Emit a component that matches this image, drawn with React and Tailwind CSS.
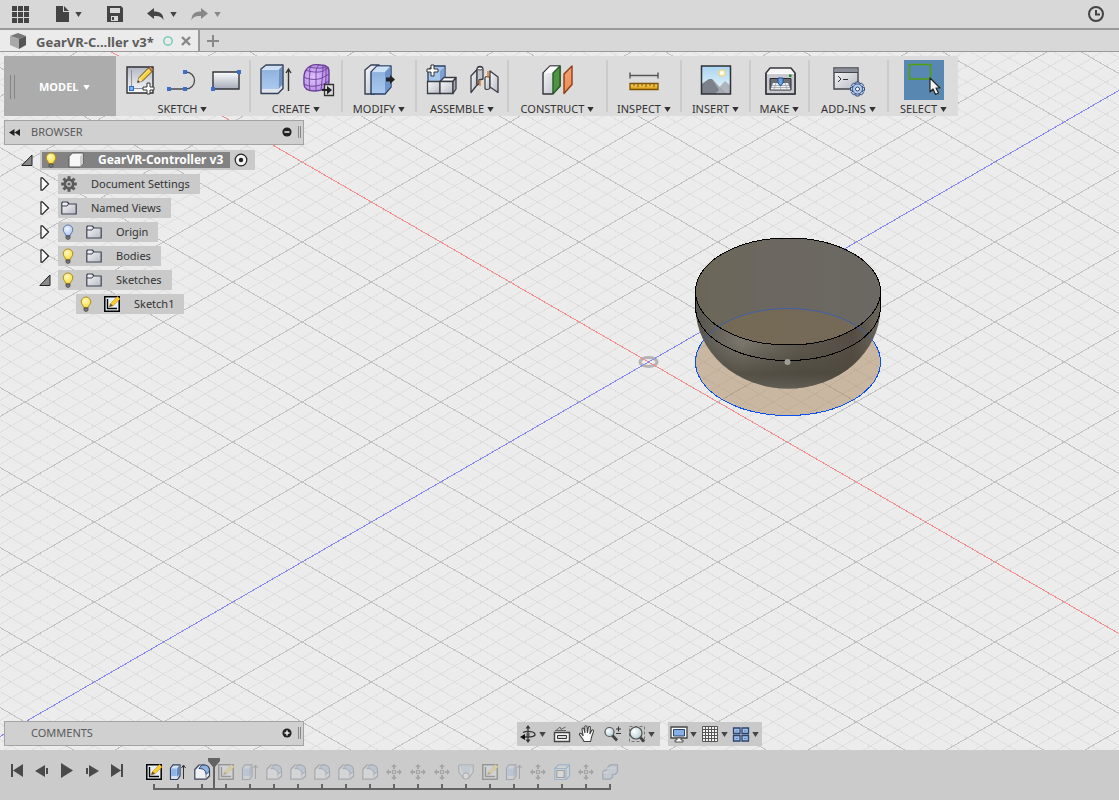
import { useState } from "react";
import clsx from "clsx";

/* ─────────────── SMALL SHARED GLYPHS ─────────────── */

const Caret = ({ className }) => (
  <svg className={clsx("shrink-0", className)} width="7" height="5" viewBox="0 0 7 5">
    <path d="M.3 0h6.400L3.500 5z" fill="currentColor" />
  </svg>
);

const Plus = ({ x, y }) => (
  <path
    transform={`translate(${x} ${y})`}
    d="M4 0h3v4h4v3H7v4H4V7H0V4h4z"
    fill="#fff"
    stroke="#333"
    strokeWidth="1"
  />
);

/* ─────────────── RIBBON ICONS ─────────────── */

const Defs = () => (
  <svg width="0" height="0" className="absolute">
    <defs>
      <linearGradient id="paper" x1="0" y1="0" x2="0" y2="1">
        <stop offset="0" stopColor="#b4b8c4" />
        <stop offset="1" stopColor="#fdfdfd" />
      </linearGradient>
      <linearGradient id="plate" x1="0" y1="0" x2="0" y2="1">
        <stop offset="0" stopColor="#fdfdfd" />
        <stop offset="1" stopColor="#a4abb9" />
      </linearGradient>
      <linearGradient id="steel" x1="0" y1="0" x2="1" y2="1">
        <stop offset="0" stopColor="#fafafa" />
        <stop offset="1" stopColor="#b6bac4" />
      </linearGradient>
      <linearGradient id="blueFace" x1="0" y1="0" x2="0" y2="1">
        <stop offset="0" stopColor="#8fb2de" />
        <stop offset="1" stopColor="#abc9ee" />
      </linearGradient>
      <linearGradient id="sky" x1="0" y1="0" x2="0" y2="1">
        <stop offset="0" stopColor="#a9d4f0" />
        <stop offset="1" stopColor="#eef8fc" />
      </linearGradient>
      <linearGradient id="gold" x1="0" y1="0" x2="0" y2="1">
        <stop offset="0" stopColor="#fbd765" />
        <stop offset="1" stopColor="#d99a10" />
      </linearGradient>
      <linearGradient id="orange" x1="0" y1="0" x2="0" y2="1">
        <stop offset="0" stopColor="#f3a27a" />
        <stop offset="1" stopColor="#ee8a4c" />
      </linearGradient>
      <radialGradient id="glow" cx="0.4" cy="0.35" r="0.7">
        <stop offset="0" stopColor="#fffbc0" />
        <stop offset="1" stopColor="#f7da38" />
      </radialGradient>
      <radialGradient id="dim" cx="0.4" cy="0.35" r="0.7">
        <stop offset="0" stopColor="#f2f7ff" />
        <stop offset="1" stopColor="#a9c3f0" />
      </radialGradient>
      <radialGradient id="lens" cx="0.35" cy="0.35" r="0.7">
        <stop offset="0" stopColor="#ffffff" />
        <stop offset="1" stopColor="#b4cfd6" />
      </radialGradient>
      <radialGradient id="violet" cx="0.4" cy="0.5" r="0.6">
        <stop offset="0" stopColor="#dfc2fd" />
        <stop offset="1" stopColor="#b48be6" />
      </radialGradient>
    </defs>
  </svg>
);

const RibbonSvg = ({ children }) => (
  <svg width="32" height="36" viewBox="0 0 32 36" fill="none" className="shrink-0 overflow-visible">
    {children}
  </svg>
);

const SketchIcon = () => (
  <RibbonSvg>
    <path d="M3 5h26v26H3z" fill="url(#paper)" stroke="#2f3136" strokeWidth="1.4" />
    <path d="M7.500 24V8M10 26.500h9" stroke="#8d919b" />
    <rect x="5.500" y="24.500" width="4" height="4" fill="#7fb2ee" stroke="#2b6cc4" />
    <path d="M15 15.500 24.500 6l3.500 3.500-9.500 9.500-5 1.500z" fill="#f8cf3c" stroke="#5d4a13" />
    <path d="m24.500 6 2-1.500 3 3L28 9.500z" fill="#c78358" stroke="#6b4630" strokeWidth=".8" />
    <path d="M16 16.500 25.500 7" stroke="#fff2a5" />
    <path d="m13.500 20.500 1.500-5 3.500 3.500z" fill="#f3e2bd" />
    <path d="m13.500 20.500.7-2.200 1.600 1.500z" fill="#333" />
    <Plus x={19} y={21} />
  </RibbonSvg>
);

const LineIcon = () => (
  <RibbonSvg>
    <path d="M2 27h17a8.500 8.500 0 0 0 0-17" stroke="#4a4a4a" strokeWidth="1.3" />
    <path d="M0 25h4v4H0zM16 25h4v4h-4zM16 8h4v4h-4z" fill="#3a6fd0" />
  </RibbonSvg>
);

const RectIcon = () => (
  <RibbonSvg>
    <path d="M3 10h26v17H3z" fill="url(#plate)" stroke="#33353a" strokeWidth="1.4" />
    <path d="M27 8h4v4h-4zM1 25h4v4H1z" fill="#3a6fd0" />
  </RibbonSvg>
);

const ExtrudeIcon = () => (
  <RibbonSvg>
    <path d="M2 7v24.500h17l5-5V3H7z" fill="#dfe3ea" strokeLinejoin="round" />
    <path d="M2.500 7.500 7 3h17l-4.500 4.500z" fill="#cfe0f4" />
    <path d="M3 8h16v19H3z" fill="url(#blueFace)" />
    <path d="M19.500 8 23.500 4v18.500l-4 4.500z" fill="#6a8fc4" />
    <path d="M2 7 7 3h17v23.500l-5 5H2z" stroke="#34405a" strokeWidth="1.4" strokeLinejoin="round" />
    <path d="M29.500 29V8M27 11l2.500-4 2.500 4" stroke="#333" strokeWidth="1.4" />
  </RibbonSvg>
);

const FormIcon = () => (
  <RibbonSvg>
    <path
      d="M4 8c3-5 9-6 15-5 5 0 8 2 8 7v10c0 6-7 9-14 9-7 0-11-2-11-7 0-5-1-10 2-14z"
      fill="url(#violet)"
      stroke="#6a4196"
      strokeWidth="1.4"
    />
    <path d="M4 8c4 2 13 3 17 1M7 5c5 1 12 2 17 0M2 15c5 3 13 3 18 1M2 22c5 3 13 3 18 0M21 9c-1 6-1 13-2 19M8 10c-1 6-1 12 0 18M14 10v19M21 9l6-4M20 16l7-4M20 23l7-4M24 6c0 8 0 14-1 20M10 3c-2 2-3 4-2 7M17 3c-2 2-3 4-3 7M22 3c-2 2-1 4-1 6" stroke="#6b3f96" strokeWidth=".9" />
    <path d="M22.500 22.500h9v11h-9z" fill="#dcdcdc" stroke="#333" strokeWidth="1.3" />
    <path d="M20 27h5v-3l5 4-5 4.500V29h-5z" fill="#222" />
  </RibbonSvg>
);

const ModifyIcon = () => (
  <RibbonSvg>
    <path d="M2 8 8 3h8v24l-5 5H2z" fill="url(#steel)" stroke="#333f55" strokeWidth="1.4" strokeLinejoin="round" />
    <path d="M8 10 14 4h14v21l-6 7H8z" fill="#9cbfe9" stroke="#2c3f63" strokeWidth="1.4" strokeLinejoin="round" />
    <path d="M9 10 14 4.500h13L22 10z" fill="#cfe1f6" />
    <path d="M22 10v21l5.500-6V4.500z" fill="#6d95cb" />
    <path d="M9 10.500h13v20.500H9z" fill="url(#blueFace)" />
    <path d="M23 15.500h4v-2.500l5 4.500-5 4.500v-2.500h-4z" fill="#222" />
  </RibbonSvg>
);

const AssembleIcon = () => (
  <RibbonSvg>
    <path d="M3 20V8l5-4h12v13l-4 3z" fill="#a5c5ec" stroke="#2c3f63" strokeWidth="1.3" />
    <path d="M15 9v10l4.500-3V5z" fill="#7ba1d4" />
    <path d="M2.500 19.500H15v12H2.500z" fill="url(#steel)" stroke="#3a3d44" strokeWidth="1.3" />
    <path d="m15 19.500 4-4h12l-3 4z" fill="#fafafa" stroke="#3a3d44" strokeWidth="1.3" strokeLinejoin="round" />
    <path d="M15 19.500h13v12H15z" fill="url(#steel)" stroke="#3a3d44" strokeWidth="1.3" />
    <path d="m28 19.500 3-4v11.500l-3 4.500z" fill="#a9adb6" stroke="#3a3d44" strokeWidth="1.3" strokeLinejoin="round" />
    <Plus x={2} y={3} />
  </RibbonSvg>
);

const JointIcon = () => (
  <RibbonSvg>
    <path d="M3 14 9 7.500V23l-6 7.500z" fill="url(#steel)" stroke="#3a3d44" strokeWidth="1.3" strokeLinejoin="round" />
    <path d="M9 7.500c0-4 6-4 6 0V17l-4 1v4l-2 1z" fill="#c3c6cd" stroke="#3a3d44" strokeWidth="1.3" strokeLinejoin="round" />
    <ellipse cx="12" cy="6.500" rx="2.500" ry="1.500" fill="#fff" stroke="#3a3d44" />
    <path d="M17 16c0-2 5-2 5 0v10c-1 2-5 2-5 0z" fill="url(#steel)" stroke="#3a3d44" strokeWidth="1.2" />
    <path d="m22 9 8 6v15.500L22 25z" fill="url(#steel)" stroke="#3a3d44" strokeWidth="1.3" strokeLinejoin="round" />
    <path d="M12 18v6M20 9v7" stroke="#e8781e" strokeWidth="1.400" />
  </RibbonSvg>
);

const ConstructIcon = () => (
  <RibbonSvg>
    <path d="M1 11 8 4h10v20l-8 8H1z" fill="url(#steel)" stroke="#33363c" strokeWidth="1.4" strokeLinejoin="round" />
    <path d="M2 11 8 4.500h9L11 11z" fill="#fff" />
    <path d="m11 11 7-7v20l-7 8z" fill="#4f9440" stroke="#2c5a25" strokeWidth="1.4" strokeLinejoin="round" />
    <path d="m22 12 8-8v18.500l-8 9z" fill="url(#orange)" stroke="#8f3d13" strokeWidth="1.4" strokeLinejoin="round" />
  </RibbonSvg>
);

const InspectIcon = () => (
  <RibbonSvg>
    <path d="M2 13.500h28M2 10.500v6M30 10.500v6" stroke="#555" strokeWidth="1.4" />
    <path d="M2 21.500h28v6H2z" fill="url(#gold)" stroke="#7d5206" strokeWidth="1.300" />
    <path d="M6 22v2M10 22v3M14 22v2M18 22v3M22 22v2M26 22v3" stroke="#7d5206" />
  </RibbonSvg>
);

const InsertIcon = () => (
  <RibbonSvg>
    <path d="M1.500 4h29v28h-29z" fill="url(#sky)" />
    <circle cx="22" cy="11" r="3" fill="#fffef0" stroke="#f3d78a" strokeWidth="1.5" />
    <path d="m14 31 11-12 6 5v8H14z" fill="#b0b5bd" />
    <path d="M1.500 22 9 17h3l14 15H1.500z" fill="#7b808a" />
    <path d="m12 17 7 11-4 4h11z" fill="#a5a9b1" />
    <path d="M1.500 4h29v28h-29z" stroke="#2e3136" strokeWidth="1.500" />
  </RibbonSvg>
);

const MakeIcon = () => (
  <RibbonSvg>
    <path d="M2 11 6 6h21l4 5v21H2z" fill="#f6f6f6" stroke="#36383c" strokeWidth="1.500" strokeLinejoin="round" />
    <path d="M2.500 12h28v19.500h-28z" fill="#c8cacf" />
    <path d="M2.500 11.500h28" stroke="#fff" />
    <path d="M25 12.500h2.500V15H25z" fill="#1c8a2a" />
    <path d="M6 16.500h21v11.500H6z" fill="#6b6e75" stroke="#2b2d31" />
    <path d="m9 21 15 0 2.500 6.500h-20z" fill="#f1f1f1" />
    <path d="M8 23.500h17M7 25.500h19M12 21l-2 6M16.500 22v6M21 21l2 6" stroke="#a0a3aa" strokeWidth=".8" />
    <path d="M14 16h5v5l-2.500 3L14 21z" fill="#6aa0e0" stroke="#1e4d90" />
    <path d="M2 11v21h29V11" stroke="#36383c" strokeWidth="1.500" strokeLinejoin="round" />
  </RibbonSvg>
);

const Teeth = () =>
  [0, 45, 90, 135, 180, 225, 270, 315].map((a) => (
    <path key={a} d="M-1.700-7h3.400v4h-3.400z" transform={`rotate(${a})`} fill="#b4cdf0" stroke="#2c4470" strokeWidth=".9" />
  ));

const AddInsIcon = () => (
  <RibbonSvg>
    <path d="M1 6h24v21H1z" fill="url(#steel)" stroke="#43454c" strokeWidth="1.400" />
    <path d="M1.500 6.500h23v4h-23z" fill="#8c8f99" />
    <path d="M1 10.500h24" stroke="#43454c" />
    <path d="m5 14 3 3-3 3M10 17.500h5" stroke="#333" />
    <g transform="translate(24.500 27)">
      <Teeth />
      <circle r="5" fill="#b4cdf0" stroke="#2c4470" strokeWidth=".8" />
      <circle r="2" fill="#fff" stroke="#2c4470" />
    </g>
  </RibbonSvg>
);

const SelectIcon = () => (
  <svg width="40" height="40" viewBox="0 0 40 40" fill="none" className="shrink-0 bg-[#5888b2]">
    <path d="M5.500 4.500h21v14.500h-21z" stroke="#4fa00c" strokeWidth="1.600" />
    <path d="M26 18v14l3-3 2.500 5.500 3-1.500-2.500-5h4z" fill="#f4f4f4" stroke="#222" strokeWidth="1.200" strokeLinejoin="round" />
  </svg>
);

const RIBBON = [
  { label: "SKETCH", width: "w-[135px]", icons: [SketchIcon, LineIcon, RectIcon] },
  { label: "CREATE", width: "w-[92px]", icons: [ExtrudeIcon, FormIcon] },
  { label: "MODIFY", width: "w-[74px]", icons: [ModifyIcon] },
  { label: "ASSEMBLE", width: "w-[92px]", icons: [AssembleIcon, JointIcon] },
  { label: "CONSTRUCT", width: "w-[99px]", icons: [ConstructIcon] },
  { label: "INSPECT", width: "w-[74px]", icons: [InspectIcon] },
  { label: "INSERT", width: "w-[69px]", icons: [InsertIcon] },
  { label: "MAKE", width: "w-[59px]", icons: [MakeIcon] },
  { label: "ADD-INS", width: "w-[79px]", icons: [AddInsIcon] },
  { label: "SELECT", width: "w-[69px]", icons: [SelectIcon] },
];

/* ─────────────── BROWSER TREE ICONS ─────────────── */

const Bulb = ({ on = true }) => (
  <svg width="14" height="16" viewBox="0 0 14 16" fill="none" className="shrink-0">
    <path
      d="M7 1a4.800 4.800 0 0 0-4.800 4.900c0 2.400 2.200 3.200 2.500 5.600h4.600c.3-2.400 2.500-3.200 2.500-5.600A4.800 4.800 0 0 0 7 1z"
      fill={on ? "url(#glow)" : "url(#dim)"}
      stroke={on ? "#b08a1c" : "#5c78b4"}
    />
    <path d="M5 12h4v2.500L7 15.500l-2-1z" fill="#777" stroke="#4a4a4a" strokeWidth=".8" />
  </svg>
);

const Folder = () => (
  <svg width="16" height="16" viewBox="0 0 16 16" fill="none" className="shrink-0">
    <path d="M.8 14v-11l1-1h4.500L8 4h7.200v10z" fill="url(#steel)" stroke="#3c4254" strokeWidth="1.200" strokeLinejoin="round" />
    <path d="M1 6h5l1.500-2" stroke="#3c4254" />
  </svg>
);

const Gear = () => (
  <svg width="16" height="16" viewBox="-8 -8 16 16" fill="none" className="shrink-0">
    {[0, 45, 90, 135, 180, 225, 270, 315].map((a) => (
      <path key={a} d="M-1.500-7.800h3V-4h-3z" transform={`rotate(${a})`} fill="#5c5c5c" />
    ))}
    <circle r="4.200" stroke="#5c5c5c" strokeWidth="2.600" />
    <circle r="1.600" fill="#5c5c5c" />
  </svg>
);

const Cube = () => (
  <svg width="16" height="16" viewBox="0 0 16 16" fill="none" className="shrink-0">
    <path d="M1 4.500 4.500 1H15v10.500L12 15H1z" fill="#f6f6f6" stroke="#555" strokeLinejoin="round" />
    <path d="m12 4.500 3-3.500v10.500L12 15z" fill="#cdcdcd" />
  </svg>
);

const SketchMini = () => (
  <svg width="16" height="16" viewBox="0 0 16 16" fill="none" className="shrink-0">
    <path d="M.8.800h14.400v14.400H.8z" fill="#e6f0fa" stroke="#000" strokeWidth="1.500" />
    <path d="M3.500 3v9.500H13" stroke="#000" strokeWidth="1.400" />
    <path d="m5.500 10.500 1-3L13.500.5 16 3 9 9.800z" fill="#f9cf2e" stroke="#d08c18" strokeWidth=".6" />
    <path d="m5 11 1.500-3.500L9 9.800z" fill="#6d5433" />
  </svg>
);

const Expander = ({ open }) => (
  <svg width="12" height="16" viewBox="0 0 12 16" fill="none" className="shrink-0">
    {open ? (
      <path d="M11 3v10.500H.8z" fill="#8a8a8a" stroke="#222" strokeLinejoin="round" />
    ) : (
      <path d="M2 1.800h1.500l6 6.200-6 6.200H2z" fill="#fafafa" stroke="#222" strokeWidth="1.200" strokeLinejoin="round" />
    )}
  </svg>
);

const TREE = [
  { label: "Document Settings", icon: Gear },
  { label: "Named Views", icon: Folder },
  { label: "Origin", icon: Folder, bulb: "off" },
  { label: "Bodies", icon: Folder, bulb: "on" },
  { label: "Sketches", icon: Folder, bulb: "on", open: true },
];

/* ─────────────── TIMELINE ICONS ─────────────── */

const Mini = ({ children }) => (
  <svg width="16" height="16" viewBox="0 0 16 16" fill="none" className="shrink-0 overflow-visible">
    {children}
  </svg>
);

const ExtrudeMini = () => (
  <Mini>
    <path d="M.5 4 3 .800h7v11L7.500 15.500h-7z" fill="#d7e2f0" stroke="#34405a" strokeWidth="1.200" strokeLinejoin="round" />
    <path d="M1.200 4.500h5.500V12H1.200z" fill="#8fb5e6" />
    <path d="M7 4.500 9.500 1v9L7 13z" fill="#5f87c0" />
    <path d="M13.500 15V2M11.500 4l2-3 2 3" stroke="#333" />
  </Mini>
);

const FilletMini = () => (
  <Mini>
    <path d="M.8 15.200V5.500L5 1h5c4 0 5.500 3 5.500 6v5L12 15.200z" fill="#eef0f4" stroke="#3c4254" strokeWidth="1.200" strokeLinejoin="round" />
    <path d="M8 1h2c4 0 5.500 3 5.500 6L12 10.500c0-3.500-2-6-7-6z" fill="#8fb2de" stroke="#2c4470" strokeLinejoin="round" />
    <path d="M12 10.500v4" stroke="#8d93a0" />
  </Mini>
);

const MoveMini = () => (
  <Mini>
    <path d="M6.500 6.500h3v3h-3z" stroke="#333" strokeWidth="1.200" />
    <path d="M8 0l3 3H9v2H7V3H5zM8 16l3-3H9v-2H7v2H5zM0 8l3-3v2h2v2H3v2zM16 8l-3-3v2h-2v2h2v2z" fill="#333" />
  </Mini>
);

const HoleMini = () => (
  <Mini>
    <path d="M.8 1h14.400v7L11 14H5L.8 8z" fill="#dfe3ea" stroke="#3c4254" />
    <path d="M2 1.500 5 9h6l3-7.500z" fill="#a9c4e6" />
    <circle cx="8" cy="12" r="3.200" fill="#fff" stroke="#3c4254" />
  </Mini>
);

const ShellMini = () => (
  <Mini>
    <path d="M.8 4.500 4.500.800h11v11L12 15.500H.8z" fill="#dbe8f6" stroke="#1f6fc0" strokeWidth="1.200" strokeLinejoin="round" />
    <path d="M.8 4.500H12l3.500-3.700M12 4.500v11" stroke="#1f6fc0" strokeWidth="1.200" />
    <path d="M2.800 6.500h7.400v7H2.800z" fill="#fff" stroke="#222" strokeWidth="1.200" />
  </Mini>
);

const CombineMini = () => (
  <Mini>
    <path d="M.8 15.200V8L3 6h3V3l2.500-2.200h7v7L13 10.500h-2.500V13l-2 2.200z" fill="#a9c4e6" stroke="#2c4470" strokeWidth="1.200" strokeLinejoin="round" />
    <path d="M1 8.500h5V4h7" stroke="#e4eefa" />
  </Mini>
);

const TIMELINE = [
  SketchMini, ExtrudeMini, FilletMini,
  SketchMini, ExtrudeMini, FilletMini, FilletMini, FilletMini, FilletMini, FilletMini,
  MoveMini, MoveMini, MoveMini, HoleMini, SketchMini, ExtrudeMini,
  MoveMini, ShellMini, MoveMini, CombineMini,
];

// Everything right of the marker is rolled back
const MARKER = 3;

const PLAYBACK = [
  { label: "Go to start", d: "M1 1h2v13H1zM13 1v13L3 7.500z" },
  { label: "Step back", d: "M10 2v12L0 8zM11 5h2v6h-2z" },
  { label: "Play", d: "M1 0v15l12-7.500z" },
  { label: "Step forward", d: "M4 2v12l10-6zM1 5h2v6H1z" },
  { label: "Go to end", d: "M11 1h2v13h-2zM1 1v13l10-6.500z" },
];

/* ─────────────── VIEWPORT ─────────────── */

const OX = 648.5;
const OY = 362;
const SLOPE = 0.57735;
const STEP = 16;

const gridPath = (filter) => {
  let d = "";
  for (let k = -60; k <= 60; k++) {
    if (!filter(k)) continue;
    const up = OY + k * STEP;
    const left = OX + 100;
    const right = 1300 - OX;
    d += `M-100 ${up - left * SLOPE}L1300 ${up + right * SLOPE}`;
    d += `M-100 ${up + left * SLOPE}L1300 ${up - right * SLOPE}`;
  }
  return d;
};

const MINOR = gridPath((k) => k % 5 !== 0);
const MAJOR = gridPath((k) => k % 5 === 0 && k !== 0);
const BODY = "M695.500 291.500V307a92.500 81.500 0 0 0 185 0V291.500a92.500 53.500 0 0 0-185 0z";

function Viewport() {
  return (
    <svg
      className="absolute inset-0 w-full h-full"
      viewBox="0 52 1119 698"
      preserveAspectRatio="xMidYMid slice"
      fill="none"
    >
      <defs>
        <linearGradient id="side" x1="0" x2="1" y1="0" y2="0">
          <stop offset="0" stopColor="#55534c" />
          <stop offset="0.250" stopColor="#7b766c" />
          <stop offset="0.550" stopColor="#5f594f" />
          <stop offset="0.850" stopColor="#544c43" />
          <stop offset="1" stopColor="#6b665c" />
        </linearGradient>
        <linearGradient id="bowl" x1="0" x2="0" y1="0" y2="1">
          <stop offset="0.700" stopColor="#4c483e" stopOpacity="0" />
          <stop offset="0.900" stopColor="#4c483e" stopOpacity="0.800" />
          <stop offset="1" stopColor="#625e55" />
        </linearGradient>
        <linearGradient id="lid" x1="0" x2="1" y1="0" y2="0">
          <stop offset="0" stopColor="#6b6757" />
          <stop offset="0.400" stopColor="#6c6760" />
          <stop offset="1" stopColor="#6b6863" />
        </linearGradient>
        <clipPath id="bodyClip">
          <path d={BODY} />
        </clipPath>
        <clipPath id="lidClip">
          <ellipse cx="788" cy="291.500" rx="92.500" ry="53.500" />
        </clipPath>
      </defs>

      <g shapeRendering="crispEdges">
        <path d={MINOR} stroke="#dfdfdf" />
        <path d={MAJOR} stroke="#c2c2c2" />
      </g>
      <ellipse cx="648.500" cy="362" rx="8.500" ry="4.500" stroke="#b5b5b5" strokeWidth="3" />
      <g shapeRendering="crispEdges">
        <path d={`M0 ${OY - OX * SLOPE}L1119 ${OY + (1119 - OX) * SLOPE}`} stroke="#f58a8a" />
        <path d={`M0 ${OY + OX * SLOPE}L1119 ${OY - (1119 - OX) * SLOPE}`} stroke="#8686f0" />
      </g>

      <ellipse cx="788" cy="362" rx="92.500" ry="53.500" fill="#a88258" fillOpacity="0.500" stroke="#0a50f0" shapeRendering="crispEdges" />
      <path d={BODY} fill="url(#side)" />
      <path d={BODY} fill="url(#bowl)" />
      <ellipse cx="788" cy="291.500" rx="92.500" ry="53.500" fill="url(#lid)" />
      <ellipse cx="788" cy="362" rx="92.500" ry="53.500" fill="#7a6c50" fillOpacity="0.600" clipPath="url(#lidClip)" />
      <path d="M695.500 362a92.500 53.500 0 0 1 185 0" stroke="#4060a8" clipPath="url(#bodyClip)" />
      <g stroke="#000" shapeRendering="crispEdges">
        <ellipse cx="788" cy="291.500" rx="92.500" ry="53.500" />
        <path d="M695.500 291.500V307a92.500 53.500 0 0 0 185 0V291.500" />
      </g>
      <circle cx="787.500" cy="362" r="3" fill="#a09c96" />
    </svg>
  );
}

/* ─────────────── NAVIGATION BAR ─────────────── */

const NavButton = ({ label, menu, children }) => (
  <button aria-label={label} className="flex items-center gap-[2px] text-[#444]">
    <svg width="18" height="18" viewBox="0 0 18 18" fill="none" className="shrink-0 overflow-visible">
      {children}
    </svg>
    {menu && <Caret />}
  </button>
);

function NavBar() {
  return (
    <div className="flex gap-2">
      <div className="flex items-center gap-[7px] h-6 pl-[2px] pr-[5px] bg-[#c9c9c9]">
        <NavButton label="Orbit" menu>
          <path d="M8 8v4M10 8v4" stroke="#333" strokeWidth=".8" />
          <path d="M9 2v14" stroke="#444" strokeWidth="1.400" />
          <path d="M4 7.500C8 5.500 16 6.500 16 9.500c0 2-4 2.800-10 2.500" stroke="#333" strokeWidth="1.300" />
          <path d="M9 0l2.500 3.500h-5zM9 18l2.500-3.500h-5z" fill="#333" />
          <path d="M1 12l5-3v6z" fill="#111" />
        </NavButton>
        <NavButton label="Look At">
          <path d="M1.500 7.500h15v9h-15z" fill="#f4f4f4" stroke="#444" strokeWidth="1.400" />
          <path d="M4.500 10.500h9v3h-9z" fill="#ddd" stroke="#333" />
          <path d="M3 5.500 7 2l1 2.500 4.500-2.500M2 5.500h11" stroke="#666" />
        </NavButton>
        <NavButton label="Pan">
          <path
            d="M6 16.500C5 13.500 2 11 1.500 9.500c-.3-1.500 1.500-1.700 2.200-.6L5.200 11 4 4.500c-.2-1.700 1.600-2 2-.5l1 4-.2-6c0-1.600 2-1.600 2.200 0l.4 6 1-5.500c.3-1.500 2.200-1.200 2 .4L11.800 9l1.800-3.500c.7-1.300 2.300-.6 1.900.8-.8 2.700-1.500 4-2 6-.4 1.600-.5 3-1 4.200z"
            fill="#fff"
            stroke="#444"
            strokeWidth="1.100"
          />
        </NavButton>
        <NavButton label="Zoom">
          <path d="m9 10 5 5.500" stroke="#444" strokeWidth="2.800" />
          <circle cx="6.500" cy="7" r="4.500" fill="url(#lens)" stroke="#555" strokeWidth="1.200" />
          <path d="M13 4h5M15.500 1.500v5M13 8.500h5" stroke="#333" />
        </NavButton>
        <NavButton label="Fit" menu>
          <path d="M1.500 1.500h15v15h-15z" stroke="#777" strokeDasharray="3 2" />
          <path d="m11 11 5 5.500" stroke="#444" strokeWidth="2.800" />
          <circle cx="8" cy="8" r="6" fill="url(#lens)" stroke="#555" strokeWidth="1.200" />
        </NavButton>
      </div>
      <div className="flex items-center gap-1 h-6 pl-[2px] pr-[3px] bg-[#c9c9c9]">
        <NavButton label="Display Settings" menu>
          <path d="M1 2h16v11H1z" fill="#fafafa" stroke="#444" strokeWidth="1.300" />
          <path d="M3.500 4.500h11v6.500h-11z" fill="#86b0e6" stroke="#2c4470" />
          <path d="M7 13h4v2h2v2H5v-2h2z" fill="#fafafa" stroke="#444" strokeWidth=".9" />
        </NavButton>
        <NavButton label="Grid and Snaps" menu>
          <path d="M1.500 1.500h15v15h-15z" fill="#f3f3f3" />
          <path d="M1.500 1.500h15v15h-15zM4.500 1v16M7.500 1v16M10.500 1v16M13.500 1v16M1 4.500h16M1 7.500h16M1 10.500h16M1 13.500h16" stroke="#555" />
        </NavButton>
        <NavButton label="Viewports" menu>
          <path d="M1.500 3h6.500v5.500H1.500zM10 3h6.500v5.500H10zM1.500 10.500h6.500V16H1.500zM10 10.500h6.500V16H10z" fill="#9fc0ea" stroke="#2c4470" strokeWidth="1.300" />
          <path d="M3.500 6h2.500M12 6h2.500M3.500 13.500h2.500M12 13.500h2.500" stroke="#5d82b8" />
        </NavButton>
      </div>
    </div>
  );
}

/* ─────────────── PANELS ─────────────── */

function PanelHeader({ title, open }) {
  return (
    <div className="flex items-center w-[300px] h-[25px] pl-1 pr-[2px] pb-px bg-[#d0d0d0] border border-[#a3a3a3]">
      <div className="w-[22px] flex items-center">
        {open && (
          <svg width="11" height="7" viewBox="0 0 11 7">
            <path d="M5.500 0v7L0 3.500zM11 0v7L5.500 3.500z" fill="#222" />
          </svg>
        )}
      </div>
      <h2 className="flex-1 text-[11px] leading-4 text-[#5a5a5a]">{title}</h2>
      <button aria-label={open ? "Collapse browser" : "Expand comments"} className="mr-[6px]">
        <svg width="10" height="10" viewBox="0 0 10 10">
          <circle cx="5" cy="5" r="4.600" fill="#222" />
          <path d={open ? "M2.500 5h5" : "M2.500 5h5M5 2.500v5"} stroke="#eee" strokeWidth="1.500" />
        </svg>
      </button>
      <div className="w-[3px] h-3 border-x border-[#888]" />
    </div>
  );
}

function TreeRow({ label, icon: Icon, bulb, open, active, onSelect }) {
  return (
    <li className="flex items-center gap-[7px] h-5 pl-[39px]">
      <button aria-label={`Toggle ${label}`} className="shrink-0">
        <Expander open={open} />
      </button>
      <button
        onClick={() => onSelect(label)}
        className={clsx("flex items-center h-5 pr-[10px]", active ? "bg-[#b5c9de]" : "bg-[#cacaca]")}
      >
        {bulb ? (
          <span className="flex items-center gap-[11px] pl-[3px] w-[58px]">
            <Bulb on={bulb === "on"} />
            <Icon />
          </span>
        ) : (
          <span className="flex pl-[3px] w-[33px]">
            <Icon />
          </span>
        )}
        {label}
      </button>
    </li>
  );
}

function BrowserTree() {
  const [selected, setSelected] = useState(null);

  return (
    <ul className="flex flex-col items-start gap-1 mt-[5px] text-[11px] leading-4 text-[#333]">
      <li className="flex items-center gap-[7px] h-5 pl-[21px]">
        <button aria-label="Toggle GearVR-Controller v3">
          <Expander open />
        </button>
        <div className="flex items-center h-5 pl-[2px] bg-[#cacaca]">
          <div className="flex items-center h-4 pl-[2px] pr-[7px] bg-[#828282]">
            <Bulb />
            <span className="pl-[10px] w-10">
              <Cube />
            </span>
            <span className="text-[12px] font-bold text-white">GearVR-Controller v3</span>
          </div>
          <button aria-label="Activate component" className="pl-1 pr-[7px]">
            <svg width="14" height="14" viewBox="0 0 14 14">
              <circle cx="7" cy="7" r="5.800" fill="#f5f5f5" stroke="#222" strokeWidth="1.200" />
              <circle cx="7" cy="7" r="2.200" fill="#222" />
            </svg>
          </button>
        </div>
      </li>
      {TREE.map((row) => (
        <TreeRow key={row.label} {...row} active={selected === row.label} onSelect={setSelected} />
      ))}
      <li className="pl-[76px]">
        <button className="flex items-center h-5 pr-[10px] bg-[#cacaca]">
          <span className="flex items-center gap-[11px] pl-[3px] w-[58px]">
            <Bulb />
            <SketchMini />
          </span>
          Sketch1
        </button>
      </li>
    </ul>
  );
}

function Ribbon() {
  return (
    <div className="flex self-start h-[60px] mt-1 ml-1 bg-[#dcdcdc]">
      <button className="flex items-center w-28 pl-[6px] pt-[2px] bg-[#acacac] text-[11px] font-bold text-white">
        <span className="w-[5px] h-6 mr-6 border-x border-[#858585]" />
        MODEL
        <Caret className="ml-[5px]" />
      </button>
      {RIBBON.map(({ label, width, icons }, i) => (
        <div key={label} className={clsx("flex items-start", width)}>
          <div className="flex-1 flex flex-col items-center pt-1">
            <div className="flex items-center gap-[11px] h-10">
              {icons.map((Icon, n) => (
                <button key={n} aria-label={`${label} ${n + 1}`}>
                  <Icon />
                </button>
              ))}
            </div>
            <button className="flex items-center gap-[3px] h-4 pt-[2px] text-[11px] leading-4 text-[#333]">
              {label}
              <Caret />
            </button>
          </div>
          {i < RIBBON.length - 1 && <div className="w-[2px] h-[52px] mt-1 bg-[#cbcbcb]" />}
        </div>
      ))}
    </div>
  );
}

function Timeline() {
  return (
    <footer className="flex items-start h-[50px] bg-[#cbcbcb]">
      <div className="flex gap-[10px] pt-[13px] pl-[10px] w-[142px]">
        {PLAYBACK.map(({ label, d }) => (
          <button key={label} aria-label={label}>
            <svg width="15" height="16" viewBox="0 0 15 16">
              <path d={d} fill="#4a4a4a" />
            </svg>
          </button>
        ))}
      </div>
      <div className="relative pt-[14px]">
        <div className="flex">
          {TIMELINE.map((Icon, i) => (
            <div key={i} className="flex flex-col items-center w-6">
              <div className={clsx(i >= MARKER && "opacity-25")}>
                <Icon />
              </div>
              <div className="w-[2px] h-1 mt-1 bg-[#636363]" />
            </div>
          ))}
        </div>
        <div className="h-[2px] mx-[11px] bg-[#636363]" />
        <svg className="absolute top-2 left-[66px]" width="12" height="32" viewBox="0 0 12 32">
          <path d="M0 0h12v3L7 9v22H5V9L0 3z" fill="#636363" />
        </svg>
      </div>
    </footer>
  );
}

/* ─────────────── TOP BARS ─────────────── */

function QuickAccess() {
  return (
    <header className="flex items-center h-[30px] pl-3 pr-[15px] bg-[#d8d8d8] border-b-2 border-[#999] text-[#444]">
      <button aria-label="Data panel">
        <svg width="17" height="17" viewBox="0 0 17 17">
          <path d="M0 0h5v5H0zM6 0h5v5H6zM12 0h5v5h-5zM0 6h5v5H0zM6 6h5v5H6zM12 6h5v5h-5zM0 12h5v5H0zM6 12h5v5H6zM12 12h5v5h-5z" fill="currentColor" />
        </svg>
      </button>
      <button aria-label="File" className="flex items-center gap-[6px] ml-[27px]">
        <svg width="13" height="16" viewBox="0 0 13 16">
          <path d="M0 0h7v6h6v10H0zM8 0l5 5H8z" fill="currentColor" />
        </svg>
        <Caret />
      </button>
      <button aria-label="Save" className="ml-[25px]">
        <svg width="16" height="16" viewBox="0 0 16 16">
          <path fillRule="evenodd" d="M0 0h14l2 2v14H0zM3 2v5h10V2zM4 10v5h7v-5z" fill="currentColor" />
          <path d="M5 11h2v3H5z" fill="currentColor" />
        </svg>
      </button>
      <button aria-label="Undo" className="flex items-center gap-[6px] ml-6">
        <svg width="17" height="13" viewBox="0 0 17 13">
          <path d="M0 5.500 7 0v3.500c6 0 9.500 2 9.500 9-1-3.500-4-5-9.500-4.500v3z" fill="currentColor" />
        </svg>
        <Caret />
      </button>
      <button aria-label="Redo" className="flex items-center gap-[6px] ml-[14px] text-[#888]">
        <svg width="17" height="13" viewBox="0 0 17 13">
          <path d="M17 5.500 10 0v3.500c-6 0-9.500 2-9.500 9 1-3.500 4-5 9.500-4.500v3z" fill="currentColor" />
        </svg>
        <Caret />
      </button>
      <button aria-label="Job status" className="ml-auto">
        <svg width="16" height="16" viewBox="0 0 16 16" fill="none">
          <circle cx="8" cy="8" r="7" stroke="currentColor" strokeWidth="2" />
          <path d="M8 4v4.500h4" stroke="currentColor" strokeWidth="2" />
        </svg>
      </button>
    </header>
  );
}

function DocumentTabs() {
  return (
    <nav className="flex h-[22px] bg-[#d8d8d8] border-b border-[#999]">
      <div className="flex items-center w-[200px] pl-[10px] bg-[#ebebeb] border-r-2 border-[#999]">
        <svg width="16" height="16" viewBox="0 0 16 16" className="shrink-0">
          <path d="M0 3 8 0l8 3-7 3z" fill="#777" />
          <path d="M0 3l9 3v10l-9-4z" fill="#a9a9a9" />
          <path d="M9 6l7-3v9l-7 4z" fill="#555" />
        </svg>
        <a href="#doc" className="ml-[10px] w-[126px] pt-[2px] whitespace-nowrap text-[13px] leading-4 font-bold text-[#5c5c5c]">
          GearVR-C...ller v3*
        </a>
        <svg width="12" height="12" viewBox="0 0 12 12" fill="none" className="shrink-0">
          <circle cx="6" cy="6" r="4.200" stroke="#66c9b0" strokeWidth="1.300" />
        </svg>
        <button aria-label="Close tab" className="ml-[7px]">
          <svg width="10" height="10" viewBox="0 0 10 10">
            <path d="m1 1 8 8M9 1 1 9" stroke="#888" strokeWidth="2.400" />
          </svg>
        </button>
      </div>
      <button aria-label="New tab" className="px-[7px]">
        <svg width="12" height="12" viewBox="0 0 12 12">
          <path d="M6 0v12M0 6h12" stroke="#888" strokeWidth="2" />
        </svg>
      </button>
    </nav>
  );
}

export default function App() {
  return (
    <div className="flex flex-col min-h-screen overflow-hidden font-['Noto_Sans','Open_Sans',sans-serif]">
      <Defs />
      <QuickAccess />
      <DocumentTabs />
      <main className="relative flex-1 flex flex-col bg-[#ececec]">
        <Viewport />
        <div className="relative flex-1 flex flex-col">
          <Ribbon />
          <section className="mt-1 pl-1">
            <PanelHeader title="BROWSER" open />
          </section>
          <BrowserTree />
          <div className="flex items-end mt-auto mb-1 ml-1 gap-[213px]">
            <PanelHeader title="COMMENTS" />
            <NavBar />
          </div>
        </div>
      </main>
      <Timeline />
    </div>
  );
}
